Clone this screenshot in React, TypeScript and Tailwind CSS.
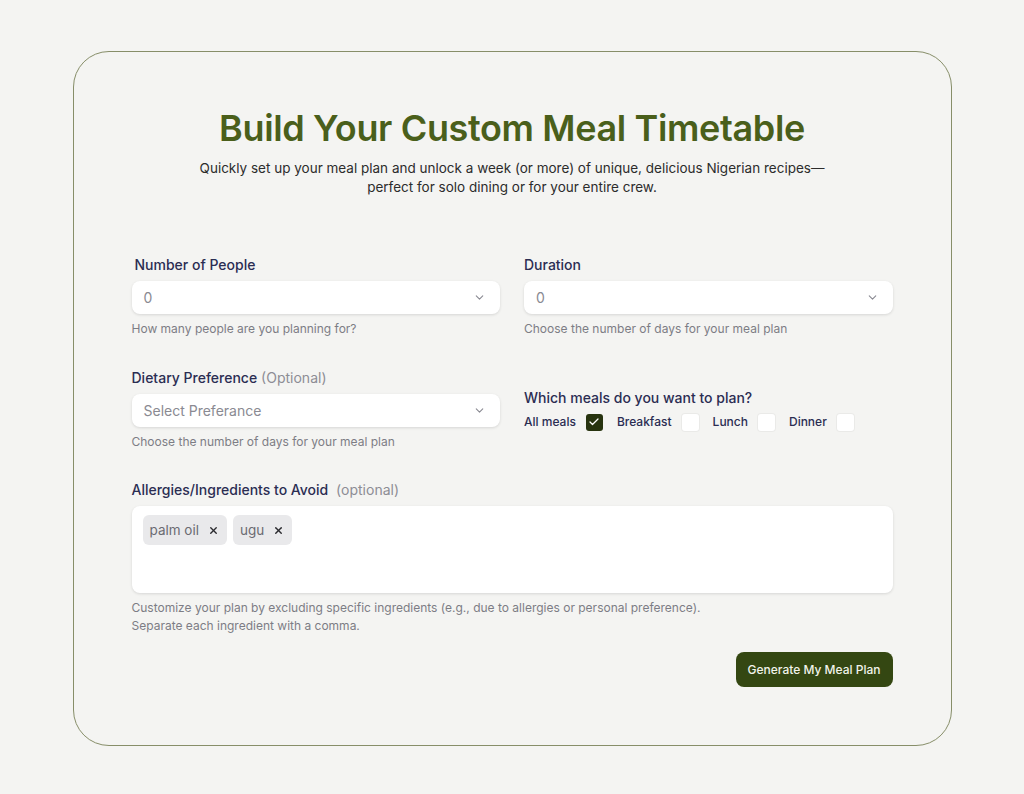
import { useState } from "react";
import { ChevronDown, Check, X } from "lucide-react";

const font = { fontFamily: "Inter, 'Noto Sans', sans-serif" };

const SelectBox = ({ value }: { value: string }) => (
  <div className="flex h-[33px] items-center justify-between rounded-lg bg-white pl-3 pr-[14px] shadow-[0_1px_3px_rgba(0,0,0,0.12)]">
    <span className="text-[14px] text-[#8a8a92]">{value}</span>
    <ChevronDown size={13} strokeWidth={2} className="text-[#8a8a92]" />
  </div>
);

const Field = ({
  label,
  optional,
  value,
  helper,
  indent,
}: {
  label: string;
  optional?: string;
  value: string;
  helper: string;
  indent?: boolean;
}) => (
  <div className="flex flex-col">
    <label className={`text-[14px] leading-5 font-medium text-[#2b2d52] ${indent ? "pl-[3px]" : ""}`}>
      {label}
      {optional && <span className="font-normal text-[#8d8d95]"> {optional}</span>}
    </label>
    <div className="mt-[6px]">
      <SelectBox value={value} />
    </div>
    <p className="mt-[7px] text-[12px] leading-4 text-[#7d7d85]">{helper}</p>
  </div>
);

const Box = ({ checked, onClick }: { checked: boolean; onClick: () => void }) => (
  <button
    onClick={onClick}
    className={`flex h-[17px] w-[17px] items-center justify-center rounded-[3px] ${
      checked ? "bg-[#27330f]" : "bg-white shadow-[0_0_0_1px_rgba(0,0,0,0.04)]"
    }`}
  >
    {checked && <Check size={12} strokeWidth={2.5} className="text-white" />}
  </button>
);

export default function App() {
  const [meals, setMeals] = useState({ all: true, breakfast: false, lunch: false, dinner: false });
  const [tags, setTags] = useState(["palm oil", "ugu"]);

  const mealItems: { key: keyof typeof meals; label: string }[] = [
    { key: "all", label: "All meals" },
    { key: "breakfast", label: "Breakfast" },
    { key: "lunch", label: "Lunch" },
    { key: "dinner", label: "Dinner" },
  ];

  return (
    <div style={font} className="min-h-screen w-full bg-[#f4f4f2] pt-[51px]">
      <div className="mx-auto w-[879px] rounded-[36px] border border-[#878e69] pl-[58px] pr-[58px] pt-[54px] pb-[58px]">
        {/* Heading */}
        <div className="text-center">
          <h1 className="text-[36px] leading-[44px] font-semibold tracking-[-0.01em] text-[#4a5f1b]">
            Build Your Custom Meal Timetable
          </h1>
          <p className="mt-[9px] whitespace-nowrap text-[13.5px] leading-[19px] text-[#2c2c2c]">
            Quickly set up your meal plan and unlock a week (or more) of unique, delicious Nigerian recipes—
            <br />
            perfect for solo dining or for your entire crew.
          </p>
        </div>

        {/* Row 1 */}
        <div className="mt-[58px] grid grid-cols-2 gap-x-6">
          <Field label="Number of People" value="0" helper="How many people are you planning for?" indent />
          <Field label="Duration" value="0" helper="Choose the number of days for your meal plan" />
        </div>

        {/* Row 2 */}
        <div className="mt-[31px] grid grid-cols-2 items-center gap-x-6">
          <Field
            label="Dietary Preference"
            optional="(Optional)"
            value="Select Preferance"
            helper="Choose the number of days for your meal plan"
          />
          <div className="flex flex-col pt-[1px]">
            <span className="text-[14px] leading-5 font-medium text-[#2b2d52]">Which meals do you want to plan?</span>
            <div className="mt-[5px] flex items-center gap-[14px]">
              {mealItems.map((m) => (
                <div key={m.key} className="flex items-center gap-[10px]">
                  <span className="text-[12px] font-medium text-[#2b2d52]">{m.label}</span>
                  <Box
                    checked={meals[m.key]}
                    onClick={() => setMeals({ ...meals, [m.key]: !meals[m.key] })}
                  />
                </div>
              ))}
            </div>
          </div>
        </div>

        {/* Allergies */}
        <div className="mt-[30px] flex flex-col">
          <label className="text-[14px] leading-5 font-medium text-[#2b2d52]">
            Allergies/Ingredients to Avoid
            <span className="font-normal text-[#8d8d95]">&nbsp; (optional)</span>
          </label>
          <div className="mt-[6px] h-[87px] rounded-lg bg-white px-[11px] pt-[9px] shadow-[0_1px_3px_rgba(0,0,0,0.12)]">
            <div className="flex gap-[6px]">
              {tags.map((t) => (
                <span
                  key={t}
                  className="flex h-[30px] items-center gap-[9px] rounded-md bg-[#e9e9eb] pl-[7px] pr-[8px] text-[13.5px] text-[#6b6b72]"
                >
                  {t}
                  <button onClick={() => setTags(tags.filter((x) => x !== t))}>
                    <X size={11} strokeWidth={3} className="text-[#2a2a2e]" />
                  </button>
                </span>
              ))}
            </div>
          </div>
          <p className="mt-[6px] text-[12px] leading-[18px] text-[#7d7d85]">
            Customize your plan by excluding specific ingredients (e.g., due to allergies or personal preference).
            <br />
            Separate each ingredient with a comma.
          </p>
        </div>

        {/* Action */}
        <div className="mt-[17px] flex justify-end">
          <button className="h-[35px] rounded-lg bg-[#344712] px-[12px] text-[12px] font-medium text-[#f1f3ea]">
            Generate My Meal Plan
          </button>
        </div>
      </div>
    </div>
  );
}
